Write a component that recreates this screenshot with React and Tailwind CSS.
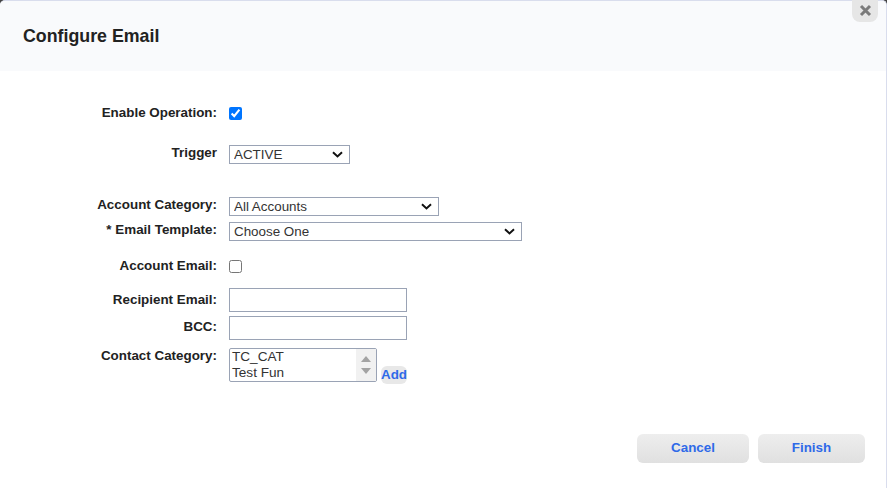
import React from "react";

const Field = ({ label, labelClass = "", className = "", children }) => (
  <div className={"flex gap-3 " + className}>
    <label className={"w-[217px] text-right text-[13.4px] leading-[16px] font-bold text-[#222] " + labelClass}>{label}</label>
    {children}
  </div>
);

const Select = ({ width, children }) => (
  <div className={"relative h-[19px] " + width}>
    <select className="block w-full h-full appearance-none border border-[#9aa3b5] bg-white pl-[4px] text-[13.4px] leading-[16px] text-[#333] rounded-none">
      {children}
    </select>
    <span className="absolute inset-y-0 right-[7px] flex items-center pointer-events-none">
      <svg width="11" height="7" viewBox="0 0 11 7">
        <path d="M1 1.2 L5.5 5.4 L10 1.2" fill="none" stroke="#111" strokeWidth="2" />
      </svg>
    </span>
  </div>
);

const inputCls = "w-[178px] h-[24px] border border-[#9aa3b5] bg-white";
const buttonCls = "h-[29px] rounded-[6px] bg-gradient-to-b from-[#eeeeee] to-[#e0e0e0] text-[13.4px] font-bold text-[#2f6ae8]";

export default function App() {
  return (
    <div className="relative w-[887px] h-[488px] bg-[#444] overflow-hidden font-['Liberation_Sans',Arial,sans-serif]">
      <div className="h-full bg-white rounded-t-[5px] overflow-hidden border-t border-[#d9dded] border-r border-r-[#d9dded] flex flex-col">
        <div className="h-[70px] bg-[#f9fafc] pl-[23px] pt-[26px]">
          <h1 className="text-[17.8px] leading-[18px] font-bold text-[#222]">Configure Email</h1>
        </div>

        <form className="flex-1 flex flex-col pt-[34px]">
          <Field label="Enable Operation:">
            <input type="checkbox" defaultChecked className="w-[13px] h-[13px] mt-[2px] m-0" />
          </Field>
          <Field label="Trigger" className="mt-[24px]">
            <Select width="w-[121px]">
              <option>ACTIVE</option>
            </Select>
          </Field>
          <Field label="Account Category:" className="mt-[33px]">
            <Select width="w-[210px]">
              <option>All Accounts</option>
            </Select>
          </Field>
          <Field label="* Email Template:" className="mt-[6px]">
            <Select width="w-[293px]">
              <option>Choose One</option>
            </Select>
          </Field>
          <Field label="Account Email:" className="mt-[17px]">
            <input type="checkbox" className="w-[13px] h-[13px] mt-[2px] m-0" />
          </Field>
          <Field label="Recipient Email:" labelClass="mt-[4px]" className="mt-[14px]">
            <input type="text" className={inputCls} />
          </Field>
          <Field label="BCC:" labelClass="mt-[3px]" className="mt-[4px]">
            <input type="text" className={inputCls} />
          </Field>
          <Field label="Contact Category:" className="mt-[8px]">
            <div className="flex items-end gap-1">
              <div className="relative w-[148px] h-[34px]">
                <select multiple size={2} className="block w-full h-full pl-[2px] border border-[#9aa3b5] rounded-[2px] bg-white text-[13.6px] leading-[16px] text-[#333] overflow-hidden">
                  <option>TC_CAT</option>
                  <option>Test Fun</option>
                </select>
                <div className="absolute top-[1px] bottom-[1px] right-[1px] w-[20px] bg-[#f1f1f1] flex flex-col items-center justify-center gap-[6px] pointer-events-none">
                  <svg width="10" height="6" viewBox="0 0 10 6"><path d="M5 0 L10 6 L0 6 Z" fill="#a3a3a3" /></svg>
                  <svg width="10" height="6" viewBox="0 0 10 6"><path d="M0 0 L10 0 L5 6 Z" fill="#a3a3a3" /></svg>
                </div>
              </div>
              <button type="button" className="w-[26px] h-[18px] -mb-[2px] rounded-[6px] bg-[#e8e8e8] text-[13.4px] leading-[18px] font-bold text-[#2f6ae8] whitespace-nowrap">Add</button>
            </div>
          </Field>

          <div className="flex justify-end gap-[9px] pr-[21px] mt-[52px]">
            <button type="button" className={buttonCls + " w-[112px]"}>Cancel</button>
            <button type="button" className={buttonCls + " w-[107px]"}>Finish</button>
          </div>
        </form>
      </div>

      <button type="button" aria-label="Close" className="absolute top-0 right-[9px] w-[26px] h-[22px] rounded-b-[8px] bg-[#e6e6e6] flex items-center justify-center">
        <svg width="13" height="13" viewBox="0 0 13 13" className="-mt-[2px]">
          <path d="M2 2 L11 11 M11 2 L2 11" stroke="#7a7a7a" strokeWidth="3" />
        </svg>
      </button>
    </div>
  );
}
